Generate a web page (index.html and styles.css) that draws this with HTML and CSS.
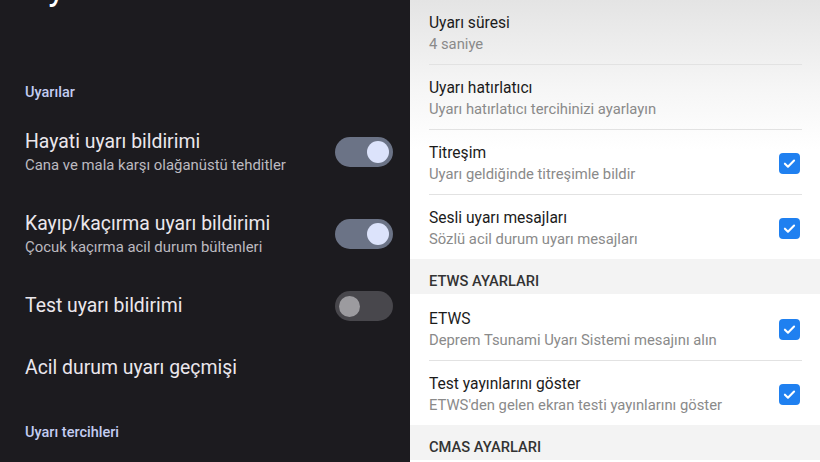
FILE: index.html
```html
<!DOCTYPE html>
<html lang="tr">
<head>
<meta charset="utf-8">
<link rel="stylesheet" href="styles.css">
</head>
<body>
<div class="screen">
  <section class="dark">
    <div class="big-title">Uyarılar</div>
    <div class="cat">Uyarılar</div>
    <div class="lrow">
      <div class="ltext">
        <div class="lt">Hayati uyarı bildirimi</div>
        <div class="ls">Cana ve mala karşı olağanüstü tehditler</div>
      </div>
      <span class="toggle on"><span class="knob"></span></span>
    </div>
    <div class="lrow">
      <div class="ltext">
        <div class="lt">Kayıp/kaçırma uyarı bildirimi</div>
        <div class="ls">Çocuk kaçırma acil durum bültenleri</div>
      </div>
      <span class="toggle on"><span class="knob"></span></span>
    </div>
    <div class="lrow">
      <div class="ltext">
        <div class="lt">Test uyarı bildirimi</div>
      </div>
      <span class="toggle off"><span class="knob"></span></span>
    </div>
    <div class="lrow">
      <div class="ltext">
        <div class="lt">Acil durum uyarı geçmişi</div>
      </div>
    </div>
    <div class="cat cat2">Uyarı tercihleri</div>
  </section>
  <section class="light">
    <div class="rrow">
      <div class="rtext">
        <div class="rt">Uyarı süresi</div>
        <div class="rs">4 saniye</div>
      </div>
    </div>
    <div class="rrow">
      <div class="rtext">
        <div class="rt">Uyarı hatırlatıcı</div>
        <div class="rs">Uyarı hatırlatıcı tercihinizi ayarlayın</div>
      </div>
    </div>
    <div class="rrow">
      <div class="rtext">
        <div class="rt">Titreşim</div>
        <div class="rs">Uyarı geldiğinde titreşimle bildir</div>
      </div>
      <span class="check"><svg viewBox="0 0 22 22" width="21" height="21"><path d="M6.2 11.2l3.2 3.1 6.4-6.4" fill="none" stroke="#fff" stroke-width="2.2" stroke-linecap="round" stroke-linejoin="round"/></svg></span>
    </div>
    <div class="rrow last">
      <div class="rtext">
        <div class="rt">Sesli uyarı mesajları</div>
        <div class="rs">Sözlü acil durum uyarı mesajları</div>
      </div>
      <span class="check"><svg viewBox="0 0 22 22" width="21" height="21"><path d="M6.2 11.2l3.2 3.1 6.4-6.4" fill="none" stroke="#fff" stroke-width="2.2" stroke-linecap="round" stroke-linejoin="round"/></svg></span>
    </div>
    <div class="rcat">ETWS AYARLARI</div>
    <div class="rrow first">
      <div class="rtext">
        <div class="rt">ETWS</div>
        <div class="rs">Deprem Tsunami Uyarı Sistemi mesajını alın</div>
      </div>
      <span class="check"><svg viewBox="0 0 22 22" width="21" height="21"><path d="M6.2 11.2l3.2 3.1 6.4-6.4" fill="none" stroke="#fff" stroke-width="2.2" stroke-linecap="round" stroke-linejoin="round"/></svg></span>
    </div>
    <div class="rrow last">
      <div class="rtext">
        <div class="rt">Test yayınlarını göster</div>
        <div class="rs">ETWS'den gelen ekran testi yayınlarını göster</div>
      </div>
      <span class="check"><svg viewBox="0 0 22 22" width="21" height="21"><path d="M6.2 11.2l3.2 3.1 6.4-6.4" fill="none" stroke="#fff" stroke-width="2.2" stroke-linecap="round" stroke-linejoin="round"/></svg></span>
    </div>
    <div class="rcat">CMAS AYARLARI</div>
  </section>
</div>
</body>
</html>
```
FILE: styles.css
```css
html, body {
  margin: 0;
  padding: 0;
  width: 820px;
  height: 462px;
  overflow: hidden;
}
body {
  font-family: Roboto, "Noto Sans", sans-serif;
}
.screen {
  display: flex;
  width: 820px;
  height: 462px;
  overflow: hidden;
}
.dark {
  width: 410px;
  flex: none;
  background: #1c1b1f;
  color: #e6e1e5;
  overflow: hidden;
}
.big-title {
  font-size: 36px;
  line-height: 44px;
  height: 44px;
  margin-top: -35px;
  padding-left: 25px;
  color: #ffffff;
}
.cat {
  margin-top: 74px;
  margin-bottom: 8px;
  padding-left: 25px;
  font-size: 14.5px;
  line-height: 20px;
  font-weight: 500;
  color: #c3cdf2;
}
.cat2 {
  margin-top: 24px;
}
.lrow {
  display: flex;
  align-items: center;
  justify-content: space-between;
  padding: 18px 17px 18px 25px;
}
.lt {
  font-size: 19.4px;
  line-height: 26px;
  color: #ebe7ec;
}
.ls {
  font-size: 14.9px;
  line-height: 20px;
  color: #bcbac0;
}
.toggle {
  position: relative;
  flex: none;
  width: 58px;
  height: 30px;
  margin: -2px 0;
  border-radius: 15px;
  display: flex;
  align-items: center;
  padding: 0 4px;
  box-sizing: border-box;
}
.toggle.on {
  background: #6b7386;
  justify-content: flex-end;
}
.toggle.off {
  background: #48474c;
  justify-content: flex-start;
}
.knob {
  width: 22px;
  height: 22px;
  border-radius: 50%;
}
.on .knob {
  background: #dce3fb;
}
.off .knob {
  width: 21px;
  height: 21px;
  background: #9c9b9f;
}
.light {
  flex: 1;
  background: linear-gradient(#e4e4e4 0, #f6f6f6 90px, #ffffff 150px);
  color: #1b1b1b;
  overflow: hidden;
}
.rrow {
  display: flex;
  align-items: center;
  justify-content: space-between;
  margin-left: 19px;
  margin-right: 18px;
  padding: 12px 2px 10px 0;
  border-bottom: 1px solid #e2e2e2;
}
.rrow.first {
  padding-top: 14px;
}
.rrow.last {
  border-bottom: none;
}
.rt {
  font-size: 15.6px;
  line-height: 22px;
  color: #1b1b1b;
}
.rs {
  font-size: 14.8px;
  line-height: 20px;
  color: #8a8a8a;
}
.check {
  flex: none;
  width: 21px;
  height: 21px;
  border-radius: 4px;
  background: #1f80f0;
  display: flex;
}
.rcat {
  background: #f3f3f3;
  padding: 13px 19px 4px;
  font-size: 14.7px;
  line-height: 18px;
  font-weight: 500;
  color: #333333;
}
```
